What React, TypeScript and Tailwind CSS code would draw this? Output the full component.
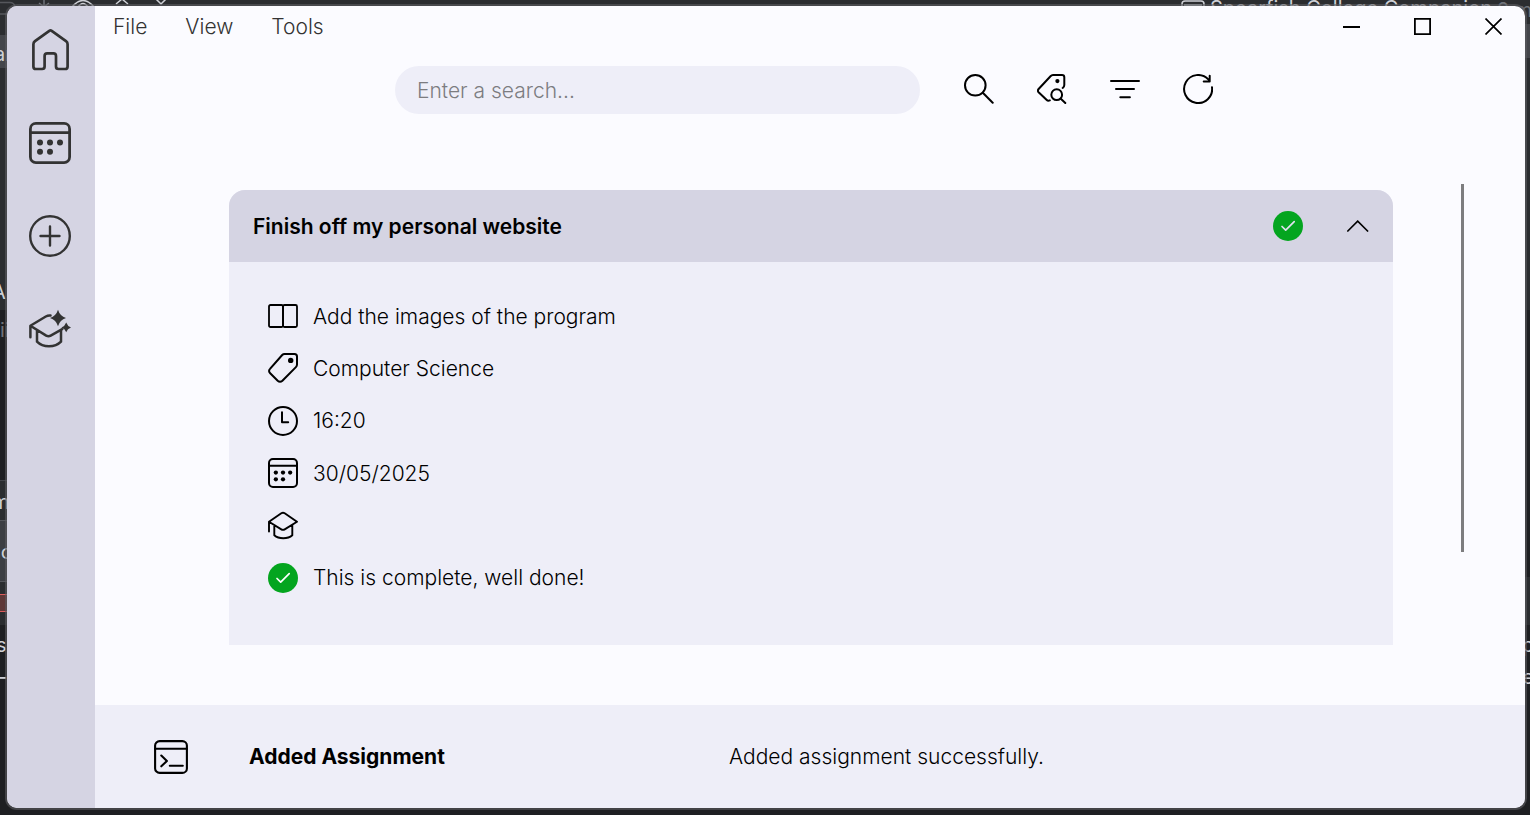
import type { ReactNode } from "react";

type IconProps = { className?: string };

function Svg({ box, className, width = 2, children }: { box: number; className?: string; width?: number; children: ReactNode }) {
  return (
    <svg
      viewBox={`0 0 ${box} ${box}`}
      className={className}
      fill="none"
      stroke="currentColor"
      strokeWidth={width}
      strokeLinecap="round"
      strokeLinejoin="round"
      aria-hidden="true"
    >
      {children}
    </svg>
  );
}

const HomeIcon = ({ className }: IconProps) => (
  <Svg box={42} className={className} width={2.7}>
    <path d="M20.3 1.8q1.2-.8 2.4 0L37 12.2q1.6 1.2 1.6 3V37.400q0 2.600-2.600 2.600h-6.500q-2.500 0-2.500-2.500V27q0-2.600-2.600-2.600h-6.200q-2.600 0-2.600 2.600v10.500q0 2.500-2.500 2.500H7q-2.600 0-2.600-2.600V15.200q0-1.800 1.600-3z" />
  </Svg>
);

const CalendarIcon = ({ className }: IconProps) => (
  <Svg box={42} className={className} width={2.8}>
    <rect x="1.400" y="1.400" width="39.200" height="39.200" rx="5.500" />
    <path d="M1.500 10.700h39" />
    <g fill="currentColor" stroke="none">
      <circle cx="11" cy="20.400" r="3" />
      <circle cx="21" cy="20.400" r="3" />
      <circle cx="31" cy="20.400" r="3" />
      <circle cx="11" cy="29.800" r="3" />
      <circle cx="21" cy="29.800" r="3" />
    </g>
  </Svg>
);

const AddIcon = ({ className }: IconProps) => (
  <Svg box={42} className={className} width={2.4}>
    <circle cx="21" cy="21" r="19.800" />
    <path d="M21 11.500v19M11.500 21h19" />
  </Svg>
);

const CapSparkleIcon = ({ className }: IconProps) => (
  <Svg box={42} className={className} width={2.5}>
    <path d="M21.500 7.500q-2.500-.3-4.700 1L1.400 17.800v11.500M1.400 17.800l15.800 9.800q2.300 1.200 4.500 0l11.500-6.400M8 22.500v11.200c6 6.200 18 6.200 24 0V22.500" />
    <g fill="currentColor" stroke="none">
      <path d="M29 1.800q1.900 6.300 8 8.200-6.100 1.900-8 8.200-1.900-6.300-8-8.200 6.100-1.900 8-8.200zM37.200 14.600q1.200 3.600 4.800 4.800-3.600 1.200-4.800 4.800-1.200-3.600-4.800-4.800 3.600-1.200 4.800-4.800z" />
    </g>
  </Svg>
);

const SearchIcon = ({ className }: IconProps) => (
  <Svg box={30} className={className} width={2}>
    <circle cx="11.300" cy="11.300" r="10.300" />
    <path d="M18.800 18.800 28.700 28.700" />
  </Svg>
);

const TagSearchIcon = ({ className }: IconProps) => (
  <Svg box={30} className={className} width={2}>
    <path d="M12.800 26.400q-1.900.8-3.300-.6L1.600 18.200q-1.400-1.500 0-3.200L13.500 2.200Q14.600 1 16 1h9q2.300 0 2.300 2.300V11q0 1.800-1.600 3" />
    <circle cx="20.400" cy="7.100" r="2.100" fill="currentColor" stroke="none" />
    <circle cx="19.700" cy="20.700" r="5.400" />
    <path d="m23.800 24.700 4.500 4.300" />
  </Svg>
);

const FilterIcon = ({ className }: IconProps) => (
  <Svg box={30} className={className} width={2}>
    <path d="M1 7h28M6 15h18M10.300 23.300h9.600" />
  </Svg>
);

const RefreshIcon = ({ className }: IconProps) => (
  <Svg box={30} className={className} width={2}>
    <path d="M29 13.200A14 14 0 1 1 25.300 5.400M26.700 1.700v5.800h-6" />
  </Svg>
);

const BookIcon = ({ className }: IconProps) => (
  <Svg box={30} className={className} width={1.8}>
    <rect x="1" y="4" width="14" height="22" rx="1.500" />
    <rect x="15" y="4" width="14" height="22" rx="1.500" />
  </Svg>
);

const TagIcon = ({ className }: IconProps) => (
  <Svg box={30} className={className} width={2}>
    <path d="M16.500 1H26.500Q29 1 29 3.500v8q0 1.500-1.100 2.600L14.400 27.700q-2.400 2.200-4.700 0l-7.500-7.500q-2.300-2.300 0-4.600L14.200 2q1-1 2.300-1z" />
    <circle cx="22.700" cy="7.400" r="2.700" fill="currentColor" stroke="none" />
  </Svg>
);

const ClockIcon = ({ className }: IconProps) => (
  <Svg box={30} className={className} width={2}>
    <circle cx="15" cy="15" r="14" />
    <path d="M14 6.300v10h6.200" />
  </Svg>
);

const CapIcon = ({ className }: IconProps) => (
  <Svg box={30} className={className} width={1.9}>
    <path d="M1 20.500v-9.700L13.300 2.200q1.700-1 3.400 0L29 10.800l-12.300 7.600q-1.700 1-3.400 0L1 10.800M6.300 14.300v10c4.500 4 13.500 4 18 0v-10" />
  </Svg>
);

const TerminalIcon = ({ className }: IconProps) => (
  <Svg box={34} className={className} width={2.1}>
    <rect x="1.100" y="1.100" width="31.800" height="31.800" rx="4.500" />
    <path d="M1.100 8.800h31.800M7.300 15.600l5.600 5.400-5.600 5.300M15.800 25.700h13" />
  </Svg>
);

function CheckBadge({ label, tick }: { label?: string; tick: string }) {
  return (
    <svg viewBox="0 0 30 30" className="size-[30px] shrink-0" fill="none" role="img" aria-label={label ?? "Complete"}>
      <circle cx="15" cy="15" r="15" fill="#04a51f" />
      <path d="m9 15.500 3.700 3.700 8.500-8.500" stroke={tick} strokeWidth="1.700" strokeLinecap="round" strokeLinejoin="round" />
    </svg>
  );
}

const details: { icon: ReactNode; text: string }[] = [
  { icon: <BookIcon className="size-[30px] shrink-0" />, text: "Add the images of the program" },
  { icon: <TagIcon className="size-[30px] shrink-0" />, text: "Computer Science" },
  { icon: <ClockIcon className="size-[30px] shrink-0" />, text: "16:20" },
  { icon: <CalendarIcon className="size-[30px] shrink-0" />, text: "30/05/2025" },
  { icon: <CapIcon className="size-[30px] shrink-0" />, text: "" },
  { icon: <CheckBadge tick="#ffffff" />, text: "This is complete, well done!" },
];

/* The editor window that lies behind the application window. */
function Desktop() {
  return (
    <div className="absolute inset-0 overflow-hidden bg-[#1e1f22] font-['Inter',sans-serif] text-xl leading-5 text-[#ced0d6]" aria-hidden="true">
      <div className="absolute inset-x-0 top-0 h-[310px] bg-[#2b2d30]" />
      <div className="absolute top-[35px] left-0 h-[33px] w-2 bg-[#43454a]" />
      <div className="absolute top-6 right-0 h-[34px] w-2 bg-[#43454a]" />
      <div className="absolute top-[480px] left-0 h-[145px] w-2 border-t border-[#43454a] bg-[#2b2d30]" />
      <div className="absolute top-[520px] left-0 h-[62px] w-2 border-y border-[#55575c] bg-[#3c3e43]" />
      <div className="absolute top-[594px] left-0 h-[18px] w-2 border-y border-[#db5c5c] bg-[#5e3838]" />
      <div className="absolute top-[577px] right-0 h-12 w-2 bg-[#2b2d30]" />
      <svg className="absolute top-0 left-0 h-5 w-48" viewBox="0 0 192 20" fill="none" stroke="#ced0d6" strokeWidth="1.500">
        <path d="M0 2.500h10q4 0 5 4M0 14h8" stroke="#55575c" />
        <path d="M44 0v6M39 3l5 4 5-4" stroke="#6f737a" />
        <path d="M72 7q11-13 22 0M78 7q5-7 10 0" />
        <path d="m116 4 6-5 6 5M156-1l5 5 5-5" />
      </svg>
      <svg className="absolute top-0 left-[1181px] h-5 w-6" viewBox="0 0 24 20" fill="none" stroke="#ced0d6" strokeWidth="1.500">
        <rect x="1" y="1" width="22" height="16" rx="3" />
        <path d="M3 5h18" />
      </svg>
      <span className="absolute -top-0.5 left-[1210px] whitespace-nowrap">Spearfish College Companion</span>
      <span className="absolute top-0 left-[1497px] whitespace-nowrap text-[#6f737a]">2 mi</span>
      <span className="absolute top-11 -left-1.5">an</span>
      <span className="absolute top-[282px] -left-2">An</span>
      <span className="absolute top-[320px] left-0 text-[#6f737a]">ii</span>
      <span className="absolute top-[492px] -left-2">m</span>
      <span className="absolute top-[542px] -left-1"><span className="text-[#c75450]">l</span>o</span>
      <span className="absolute top-[635px] -left-1">s</span>
      <span className="absolute top-[667px] -left-1">–</span>
      <span className="absolute top-[635px] -right-1">p</span>
      <span className="absolute top-[667px] -right-1">e</span>
    </div>
  );
}

function Sidebar() {
  return (
    <nav aria-label="Main" className="flex w-[88px] shrink-0 flex-col items-start gap-[51px] bg-[#d5d4e3] pt-[23px] pl-[22px] text-[#333]">
      <button type="button" aria-label="Home"><HomeIcon className="size-[42px]" /></button>
      <button type="button" aria-label="Calendar"><CalendarIcon className="size-[42px]" /></button>
      <button type="button" aria-label="Add assignment"><AddIcon className="size-[42px]" /></button>
      <button type="button" aria-label="Study assistant"><CapSparkleIcon className="size-[42px]" /></button>
    </nav>
  );
}

function TitleBar() {
  return (
    <header className="flex h-10 shrink-0 items-center justify-between pr-[23px] pl-[18px]">
      <div className="flex gap-[38px] text-[#333]">
        <button type="button">File</button>
        <button type="button">View</button>
        <button type="button">Tools</button>
      </div>
      <div className="flex gap-[54px]">
        <button type="button" aria-label="Minimize">
          <svg viewBox="0 0 17 17" className="size-[17px]" stroke="currentColor" strokeWidth="2" aria-hidden="true"><path d="M0 9h17" /></svg>
        </button>
        <button type="button" aria-label="Maximize">
          <svg viewBox="0 0 17 17" className="size-[17px]" fill="none" stroke="currentColor" strokeWidth="1.800" aria-hidden="true"><path d="M.9.900h15.200v15.200H.9z" /></svg>
        </button>
        <button type="button" aria-label="Close">
          <svg viewBox="0 0 17 17" className="size-[17px]" stroke="currentColor" strokeWidth="1.700" aria-hidden="true"><path d="m.5.5 16 16M16.500.5l-16 16" /></svg>
        </button>
      </div>
    </header>
  );
}

function SearchBar() {
  return (
    <form role="search" className="mt-5 flex items-center justify-center gap-11 pr-3" onSubmit={(e) => e.preventDefault()}>
      <input
        type="search"
        aria-label="Search"
        placeholder="Enter a search..."
        className="h-12 w-[525px] min-w-0 rounded-full bg-[#eeeef8] px-[22px] font-light outline-none placeholder:text-[#7c7c80]"
      />
      <div className="flex gap-[43px] pb-0.5">
        <button type="submit" aria-label="Search"><SearchIcon className="size-[30px]" /></button>
        <button type="button" aria-label="Search by tag"><TagSearchIcon className="size-[30px]" /></button>
        <button type="button" aria-label="Filter"><FilterIcon className="size-[30px]" /></button>
        <button type="button" aria-label="Refresh"><RefreshIcon className="size-[30px]" /></button>
      </div>
    </form>
  );
}

function AssignmentCard() {
  return (
    <article className="mt-[6px] min-w-0 flex-1 self-start overflow-hidden rounded-t-2xl bg-[#eeeef8]">
      <div className="flex h-[72px] items-center bg-[#d5d4e3] px-6">
        <h2 className="flex-1 font-semibold">Finish off my personal website</h2>
        <CheckBadge tick="#e0e0ee" />
        <button type="button" aria-label="Collapse" className="ml-11">
          <svg viewBox="0 0 22 12" className="h-3 w-[22px]" fill="none" stroke="currentColor" strokeWidth="1.600" aria-hidden="true">
            <path d="m.3 11.500 10.400-10.400 10.400 10.400" />
          </svg>
        </button>
      </div>
      <ul className="flex min-h-[383px] flex-col justify-between pt-[39px] pr-6 pb-[52px] pl-[39px]">
        {details.map((d, i) => (
          <li key={i} className="flex h-[30px] items-center gap-[15px]">
            {d.icon}
            {d.text && <span>{d.text}</span>}
          </li>
        ))}
      </ul>
    </article>
  );
}

export default function App() {
  return (
    <div className="relative flex min-h-screen flex-col pt-1 pr-[3px] pb-[5px] pl-[5px]">
      <Desktop />
      <div className="relative flex flex-1 overflow-hidden rounded-xl border-2 border-[#5c5c60]/60 bg-[#fbfbff] bg-clip-padding font-['Inter',sans-serif] text-[21px] leading-[31px] font-light text-black">
        <Sidebar />
        <div className="flex min-w-0 flex-1 flex-col">
          <TitleBar />
          <SearchBar />
          <main className="mt-[70px] flex flex-1 gap-[68px] pr-[61px] pb-[60px] pl-[134px]">
            <AssignmentCard />
            <div className="h-[368px] w-[3px] bg-[#7d7d7f]" />
          </main>
          <footer className="flex min-h-[103px] items-center bg-[#eeeef8] pl-[59px]">
            <TerminalIcon className="size-[34px] shrink-0" />
            <strong className="ml-[61px] w-[480px] font-bold">Added Assignment</strong>
            <p>Added assignment successfully.</p>
          </footer>
        </div>
      </div>
    </div>
  );
}
